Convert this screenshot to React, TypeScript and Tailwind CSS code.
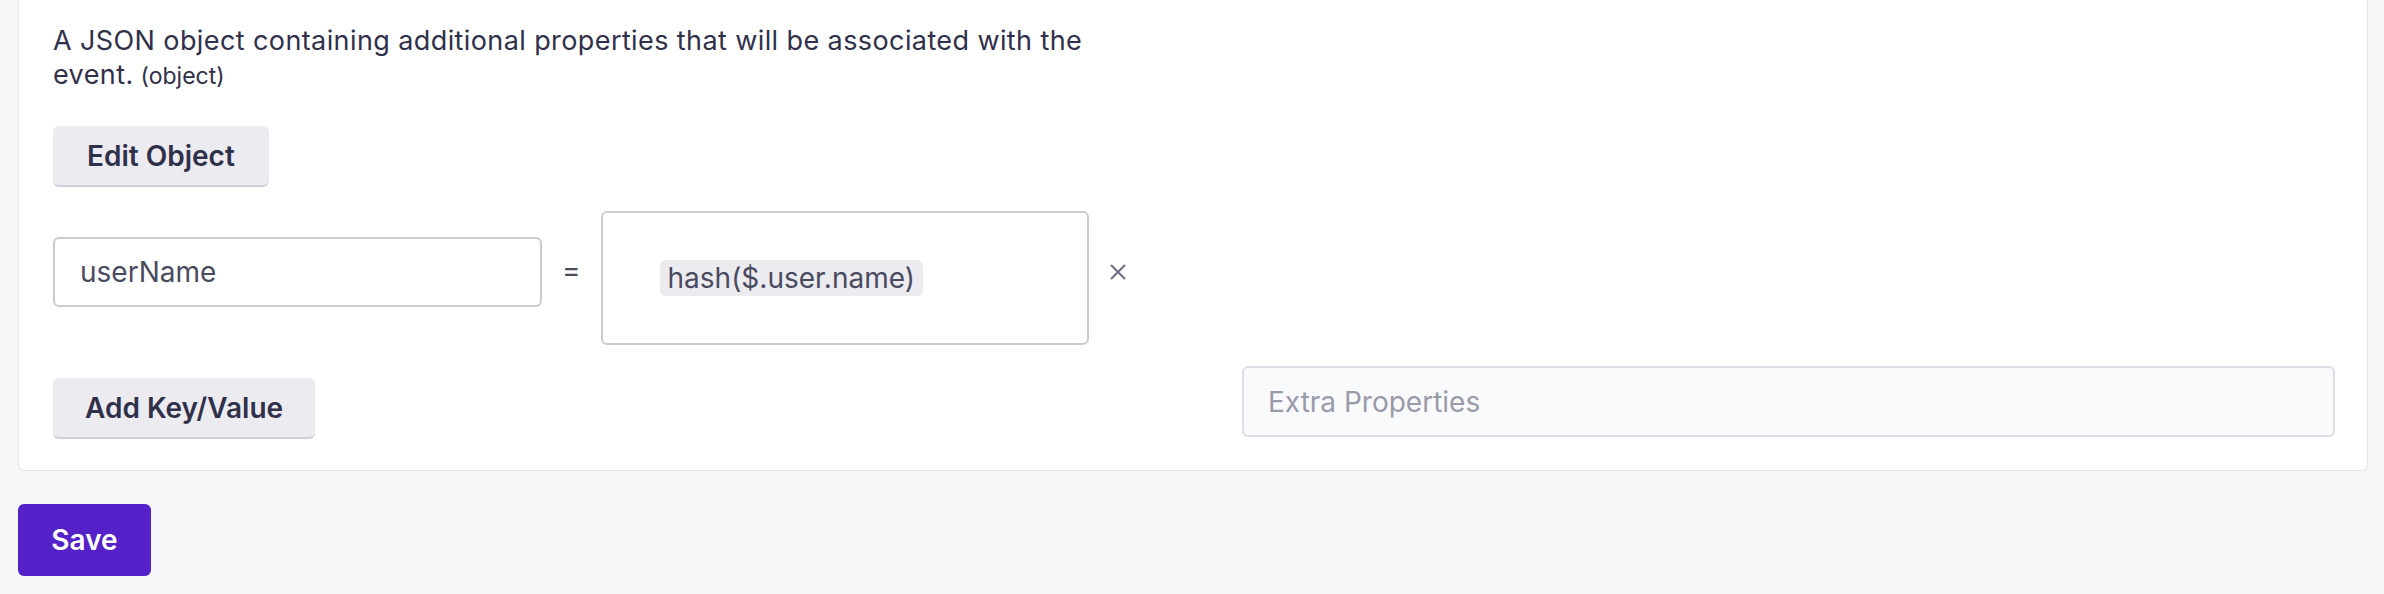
export default function App() {
  return (
    <div className="min-h-screen bg-[#f6f7f9] pl-[18px] pr-[16px] font-['Inter','Noto_Sans',sans-serif] text-[#30304a]">
      <section className="rounded-b-[6px] border border-t-0 border-[#e6e6ec] bg-white pl-[34px] pr-[32px] pt-[24px] pb-[31px]">
        <div className="w-[1092px] text-[27px] leading-[34px] tracking-[0.4px]">
          <p>A JSON object containing additional properties that will be associated with the</p>
          <p>
            event.
            <span className="ml-[7px] text-[23px] tracking-normal">(object)</span>
          </p>
        </div>

        <button className="mt-[33px] h-[61px] rounded-[6px] border-b-2 border-[#cfcfda] bg-[#ebebf0] px-[34px] text-[28px] font-semibold text-[#30304a]">
          Edit Object
        </button>

        <div className="mt-[24px] flex items-start">
          <div className="mt-[26px] flex h-[70px] w-[489px] items-center rounded-[6px] border-2 border-[#cbcbd6] px-[25px] text-[28px] text-[#4a4a5e]">
            userName
          </div>
          <span className="mx-[20px] mt-[42px] text-[28px] leading-[34px] text-[#4a4a5e]">=</span>
          <div className="flex h-[134px] w-[488px] items-center rounded-[6px] border-2 border-[#cbcbd6] pl-[57px]">
            <span className="rounded-[6px] bg-[#ebebf0] px-[8px] text-[28px] leading-[36px] text-[#4a4a5e]">
              hash($.user.name)
            </span>
          </div>
          <svg
            className="ml-[21px] mt-[53px]"
            width="16"
            height="16"
            viewBox="0 0 16 16"
            fill="none"
            stroke="#6e6e82"
            strokeWidth="2"
            strokeLinecap="round"
          >
            <path d="M1.5 1.5l13 13M14.5 1.5l-13 13" />
          </svg>
        </div>

        <div className="mt-[21px] flex items-start">
          <button className="mt-[12px] h-[61px] rounded-[6px] border-b-2 border-[#cfcfda] bg-[#ebebf0] px-[32px] text-[28px] font-semibold text-[#30304a]">
            Add Key/Value
          </button>
          <input
            placeholder="Extra Properties"
            className="ml-auto h-[71px] w-[1093px] rounded-[6px] border-2 border-[#dedee6] bg-[#f9fafc] px-[24px] text-[28px] text-[#4a4a5e] placeholder:text-[#9a9aaa] outline-none"
          />
        </div>
      </section>

      <button className="mt-[33px] h-[72px] w-[133px] rounded-[6px] bg-[#5521c8] text-[28px] font-semibold text-white">
        Save
      </button>
    </div>
  );
}
